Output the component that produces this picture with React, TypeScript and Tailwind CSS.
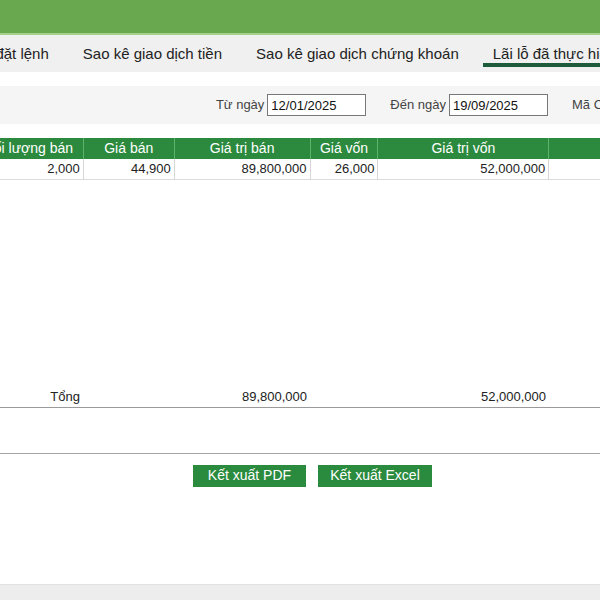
const font = { fontFamily: '"Liberation Sans", Arial, sans-serif' }

const tabs = ['Lịch sử đặt lệnh', 'Sao kê giao dịch tiền', 'Sao kê giao dịch chứng khoán', 'Lãi lỗ đã thực hiện']

const cols = [
  { label: 'Khối lượng bán', w: 117 },
  { label: 'Giá bán', w: 91 },
  { label: 'Giá trị bán', w: 136 },
  { label: 'Giá vốn', w: 68 },
  { label: 'Giá trị vốn', w: 171 },
  { label: 'Lãi lỗ', w: 140 },
]

const row = ['2,000', '44,900', '89,800,000', '26,000', '52,000,000', '']

export default function App() {
  return (
    <div className="h-[600px] w-[600px] overflow-hidden bg-white text-[#222]" style={font}>
      <div className="h-[35px] border-b-2 border-[#a8d08d] bg-[#6aa84f]" />

      <div className="h-[37px] overflow-hidden bg-[#f0f0f0]">
        <div className="ml-[-68px] flex gap-[14px] whitespace-nowrap">
          {tabs.map((t, i) => (
            <div
              key={t}
              className={
                'px-[10px] pt-[10px] text-[15px] leading-[18px] ' +
                (i === 3 ? 'border-b-4 border-[#1d5c3b] pr-[40px]' : 'border-b-4 border-transparent')
              }
            >
              {t}
            </div>
          ))}
        </div>
      </div>

      <div className="mt-[14px] flex h-[38px] items-center justify-end gap-[3px] whitespace-nowrap bg-[#f5f5f5] text-[13px] text-[#444]">
        <span>Từ ngày</span>
        <input
          readOnly
          value="12/01/2025"
          className="h-[22px] w-[99px] border border-[#777] bg-white px-[3px] text-[13px] text-[#111] outline-none"
        />
        <span className="ml-[21px]">Đến ngày</span>
        <input
          readOnly
          value="19/09/2025"
          className="h-[22px] w-[99px] border border-[#777] bg-white px-[3px] text-[13px] text-[#111] outline-none"
        />
        <span className="ml-[21px] w-[28px] overflow-hidden">Mã CK</span>
      </div>

      <div className="mt-[14px] ml-[-34px] w-[723px]">
        <table className="table-fixed border-collapse text-[13px]">
          <colgroup>
            {cols.map((c) => (
              <col key={c.label} style={{ width: c.w }} />
            ))}
          </colgroup>
          <thead>
            <tr className="h-[20px] bg-[#2b8a3e] text-white">
              {cols.map((c) => (
                <th key={c.label} className="border-x border-[#5fb26c] text-center text-[14px] font-normal">
                  {c.label}
                </th>
              ))}
            </tr>
          </thead>
          <tbody>
            <tr className="h-[20px] border-b border-[#dcdcdc]">
              {row.map((v, i) => (
                <td key={i} className="border-x border-[#d6d6d6] px-[3px] text-right">
                  {v}
                </td>
              ))}
            </tr>
          </tbody>
        </table>

        <div className="h-[207px]" />

        <div className="flex h-[21px] items-center border-b border-[#9a9a9a] text-[13px]">
          <div className="w-[117px] pr-[3px] text-right">Tổng</div>
          <div className="w-[91px]" />
          <div className="w-[136px] pr-[3px] text-right">89,800,000</div>
          <div className="w-[68px]" />
          <div className="w-[171px] pr-[3px] text-right">52,000,000</div>
        </div>
        <div className="h-[46px] border-b border-[#a5a5a5]" />
      </div>

      <div className="mt-[11px] flex justify-center gap-[12px] pl-[25px]">
        <button className="h-[22px] w-[113px] bg-[#2a8a3e] text-[14px] text-white">Kết xuất PDF</button>
        <button className="h-[22px] w-[114px] bg-[#2a8a3e] text-[14px] text-white">Kết xuất Excel</button>
      </div>

      <div className="mt-[97px] h-[18px] border-t border-[#e2e2e2] bg-[#ededed]" />
    </div>
  )
}
